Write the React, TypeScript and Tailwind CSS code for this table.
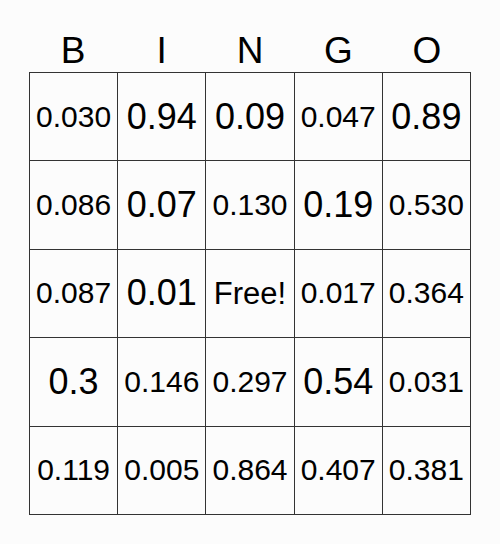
const letters = ["B", "I", "N", "G", "O"]

const cells = [
    ["0.030", "0.94", "0.09", "0.047", "0.89"],
    ["0.086", "0.07", "0.130", "0.19", "0.530"],
    ["0.087", "0.01", "Free!", "0.017", "0.364"],
    ["0.3", "0.146", "0.297", "0.54", "0.031"],
    ["0.119", "0.005", "0.864", "0.407", "0.381"],
]

function sizeFor(text: string) {
    if (text === "Free!") return "text-[31px]"
    if (text.length >= 5) return "text-[30px]"
    return "text-[36px]"
}

export default function App() {
    return (
        <div
            className="min-h-[544px] w-[500px] bg-[#fcfcfc] text-black"
            style={{ fontFamily: '"Liberation Sans", Arial, sans-serif' }}
        >
            <div className="mx-auto w-[442px]">
                <div className="grid h-[72px] grid-cols-5 items-end pb-[3px]">
                    {letters.map((l) => (
                        <div key={l} className="text-center text-[37px] leading-none">
                            {l}
                        </div>
                    ))}
                </div>
                <div className="grid grid-cols-5 border-t border-l border-[#333]">
                    {cells.flat().map((c, i) => (
                        <div
                            key={i}
                            className={`flex h-[88.4px] items-center justify-center border-r border-b border-[#333] leading-none whitespace-nowrap ${sizeFor(c)}`}
                        >
                            {c}
                        </div>
                    ))}
                </div>
            </div>
        </div>
    )
}
